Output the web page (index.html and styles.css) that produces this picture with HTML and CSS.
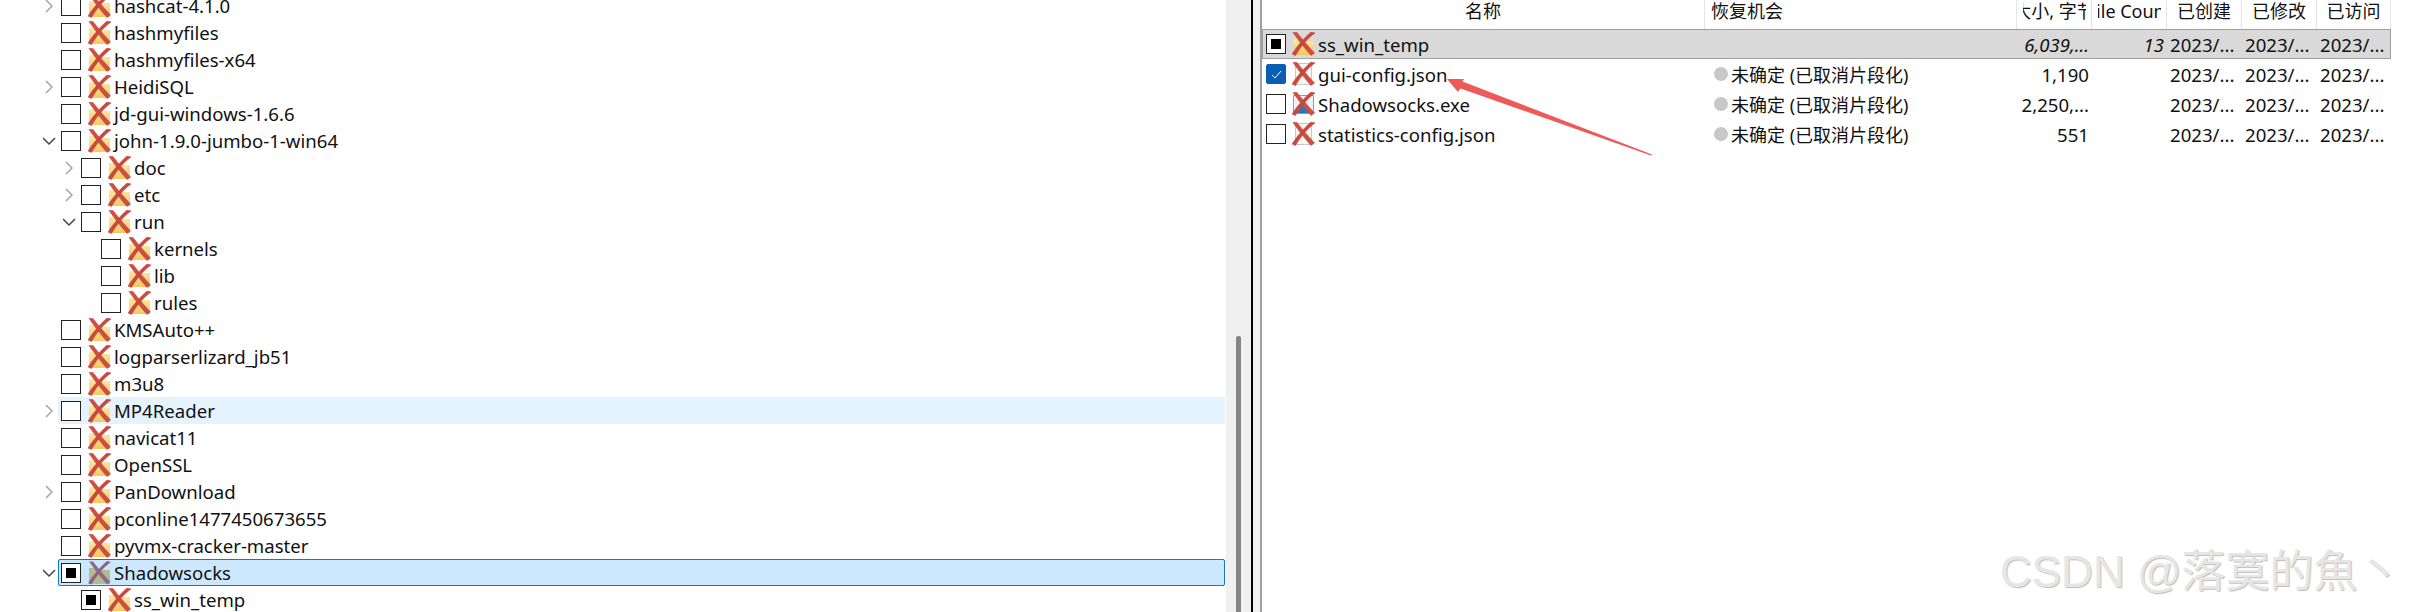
FILE: index.html
```html
<!DOCTYPE html>
<html lang="zh-CN">
<head>
    <meta charset="UTF-8">
    <title>Recovery</title>
    <link rel="stylesheet" href="styles.css">
</head>

<body>
    <svg class="defs" width="0" height="0">
        <defs>
            <linearGradient id="folder-fill" x1="0" y1="0" x2="0" y2="1">
                <stop offset="0" stop-color="#fde8a8"/>
                <stop offset="1" stop-color="#f5c85e"/>
            </linearGradient>
            <g id="cross" stroke="#c8483c" stroke-width="0.600">
                <path d="M1 0.500L5 0.500C10 7 16 14 22.500 21L19 23.500C13 17 7 9 1 0.500z" fill="#cc4f42"/>
                <path d="M19 0L23 1C16 6 9 14 3.500 23.500L0 22C6 13 12 6 19 0z" fill="#c8483c"/>
            </g>
            <symbol id="folder" viewBox="0 0 23 24">
                <path d="M1 7h8l2 2h11v14H1z" fill="url(#folder-fill)"/>
                <use href="#cross"/>
            </symbol>
            <symbol id="folder-dim" viewBox="0 0 23 24">
                <path d="M1 7h8l2 2h11v14H1z" fill="#b2ba8e"/>
                <path d="M1 0.500L5 0.500C10 7 16 14 22.500 21L19 23.500C13 17 7 9 1 0.500z" fill="#8f6a86"/>
                <path d="M19 0L23 1C16 6 9 14 3.500 23.500L0 22C6 13 12 6 19 0z" fill="#8b6480"/>
            </symbol>
            <symbol id="file" viewBox="0 0 23 24">
                <path d="M3.500 1.500h16v21h-16z" fill="#f6f6f6" stroke="#c8c8c8"/>
                <use href="#cross"/>
            </symbol>
            <symbol id="exe" viewBox="0 0 23 24">
                <path d="M1.500 3.500h20v18h-20z" fill="#eef1f5" stroke="#8f9bab"/>
                <path d="M11.500 11l7 10h-14z" fill="#2a78b8"/>
                <use href="#cross"/>
            </symbol>
        </defs>
    </svg>

    <div class="window">
        <div class="tree-pane">
            <ul class="tree">
                <li class="row lvl-0"><svg class="arrow"><path d="M3 1l6 6-6 6"/></svg><span class="check"></span><svg class="icon"><use href="#folder"/></svg>hashcat-4.1.0</li>
                <li class="row lvl-0"><span class="arrow"></span><span class="check"></span><svg class="icon"><use href="#folder"/></svg>hashmyfiles</li>
                <li class="row lvl-0"><span class="arrow"></span><span class="check"></span><svg class="icon"><use href="#folder"/></svg>hashmyfiles-x64</li>
                <li class="row lvl-0"><svg class="arrow"><path d="M3 1l6 6-6 6"/></svg><span class="check"></span><svg class="icon"><use href="#folder"/></svg>HeidiSQL</li>
                <li class="row lvl-0"><span class="arrow"></span><span class="check"></span><svg class="icon"><use href="#folder"/></svg>jd-gui-windows-1.6.6</li>
                <li class="row lvl-0"><svg class="arrow open"><path d="M0 4l6 6 6-6"/></svg><span class="check"></span><svg class="icon"><use href="#folder"/></svg>john-1.9.0-jumbo-1-win64</li>
                <li class="row lvl-1"><svg class="arrow"><path d="M3 1l6 6-6 6"/></svg><span class="check"></span><svg class="icon"><use href="#folder"/></svg>doc</li>
                <li class="row lvl-1"><svg class="arrow"><path d="M3 1l6 6-6 6"/></svg><span class="check"></span><svg class="icon"><use href="#folder"/></svg>etc</li>
                <li class="row lvl-1"><svg class="arrow open"><path d="M0 4l6 6 6-6"/></svg><span class="check"></span><svg class="icon"><use href="#folder"/></svg>run</li>
                <li class="row lvl-2"><span class="arrow"></span><span class="check"></span><svg class="icon"><use href="#folder"/></svg>kernels</li>
                <li class="row lvl-2"><span class="arrow"></span><span class="check"></span><svg class="icon"><use href="#folder"/></svg>lib</li>
                <li class="row lvl-2"><span class="arrow"></span><span class="check"></span><svg class="icon"><use href="#folder"/></svg>rules</li>
                <li class="row lvl-0"><span class="arrow"></span><span class="check"></span><svg class="icon"><use href="#folder"/></svg>KMSAuto++</li>
                <li class="row lvl-0"><span class="arrow"></span><span class="check"></span><svg class="icon"><use href="#folder"/></svg>logparserlizard_jb51</li>
                <li class="row lvl-0"><span class="arrow"></span><span class="check"></span><svg class="icon"><use href="#folder"/></svg>m3u8</li>
                <li class="row lvl-0 hover"><svg class="arrow"><path d="M3 1l6 6-6 6"/></svg><span class="check"></span><svg class="icon"><use href="#folder"/></svg>MP4Reader</li>
                <li class="row lvl-0"><span class="arrow"></span><span class="check"></span><svg class="icon"><use href="#folder"/></svg>navicat11</li>
                <li class="row lvl-0"><span class="arrow"></span><span class="check"></span><svg class="icon"><use href="#folder"/></svg>OpenSSL</li>
                <li class="row lvl-0"><svg class="arrow"><path d="M3 1l6 6-6 6"/></svg><span class="check"></span><svg class="icon"><use href="#folder"/></svg>PanDownload</li>
                <li class="row lvl-0"><span class="arrow"></span><span class="check"></span><svg class="icon"><use href="#folder"/></svg>pconline1477450673655</li>
                <li class="row lvl-0"><span class="arrow"></span><span class="check"></span><svg class="icon"><use href="#folder"/></svg>pyvmx-cracker-master</li>
                <li class="row lvl-0 selected"><svg class="arrow open"><path d="M0 4l6 6 6-6"/></svg><span class="check partial"></span><svg class="icon"><use href="#folder-dim"/></svg>Shadowsocks</li>
                <li class="row lvl-1"><span class="arrow"></span><span class="check partial"></span><svg class="icon"><use href="#folder"/></svg>ss_win_temp</li>
            </ul>
        </div>

        <div class="scrollbar"><div class="thumb"></div></div>
        <div class="splitter"></div>

        <div class="list-pane">
            <div class="cols head">
                <div class="cell center">名称</div>
                <div class="cell start">恢复机会</div>
                <div class="cell center"><span class="clip"><span>大小, 字节</span></span></div>
                <div class="cell center"><span class="clip"><span>File Count</span></span></div>
                <div class="cell center">已创建</div>
                <div class="cell center">已修改</div>
                <div class="cell center">已访问</div>
            </div>
            <div class="cols item current">
                <div class="cell name"><span class="check partial"></span><svg class="icon"><use href="#folder"/></svg>ss_win_temp</div>
                <div class="cell"></div>
                <div class="cell num italic">6,039,...</div>
                <div class="cell num italic">13</div>
                <div class="cell date">2023/...</div>
                <div class="cell date">2023/...</div>
                <div class="cell date">2023/...</div>
            </div>
            <div class="cols item">
                <div class="cell name"><span class="check checked"><svg width="11" height="9"><path d="M1 5l3 3 6-7"/></svg></span><svg class="icon"><use href="#file"/></svg>gui-config.json</div>
                <div class="cell chance"><span class="dot"></span>未确定 (已取消片段化)</div>
                <div class="cell num">1,190</div>
                <div class="cell num"></div>
                <div class="cell date">2023/...</div>
                <div class="cell date">2023/...</div>
                <div class="cell date">2023/...</div>
            </div>
            <div class="cols item">
                <div class="cell name"><span class="check"></span><svg class="icon"><use href="#exe"/></svg>Shadowsocks.exe</div>
                <div class="cell chance"><span class="dot"></span>未确定 (已取消片段化)</div>
                <div class="cell num">2,250,...</div>
                <div class="cell num"></div>
                <div class="cell date">2023/...</div>
                <div class="cell date">2023/...</div>
                <div class="cell date">2023/...</div>
            </div>
            <div class="cols item">
                <div class="cell name"><span class="check"></span><svg class="icon"><use href="#file"/></svg>statistics-config.json</div>
                <div class="cell chance"><span class="dot"></span>未确定 (已取消片段化)</div>
                <div class="cell num">551</div>
                <div class="cell num"></div>
                <div class="cell date">2023/...</div>
                <div class="cell date">2023/...</div>
                <div class="cell date">2023/...</div>
            </div>
        </div>

        <!-- red annotation arrow drawn on top of the screenshot -->
        <svg class="annotation" width="220" height="100" viewBox="0 0 220 100">
            <path d="M7 9L24 9L22.500 11.500L212 84.500L211 85.500L20.500 18.500L18 22z" fill="#ee5a5a"/>
        </svg>

        <div class="watermark">CSDN @落寞的魚丶</div>
    </div>
</body>

</html>
```

FILE: styles.css
```css
* {
    box-sizing: border-box;
}

html, body {
    margin: 0;
    height: 100%;
    overflow: hidden;
    background-color: #fff;
}

body {
    font-family: "Noto Sans", "Noto Sans CJK SC", sans-serif;
    font-size: 18.600px;
    color: #111;
}

.defs {
    display: block;
    height: 0;
}

.window {
    position: relative;
    display: flex;
    height: 612px;
    overflow: hidden;
}

.tree-pane {
    flex: 0 0 1226px;
    overflow: hidden;
}

.tree {
    list-style: none;
    margin: -8px 0 0;
    padding: 0 1px 0 0;
}

.row {
    display: flex;
    align-items: center;
    height: 27px;
    margin-left: 58px;
    white-space: nowrap;
}

.arrow {
    flex: 0 0 14px;
    width: 14px;
    height: 14px;
    margin-left: -15px;
    margin-right: 4px;
}

.arrow path {
    fill: none;
    stroke: #a6a6a6;
    stroke-width: 1.500;
}

.arrow.open path {
    stroke: #444;
}

.lvl-1 .arrow {
    margin-left: 5px;
}

.lvl-2 .arrow {
    margin-left: 25px;
}

.check {
    flex: none;
    display: flex;
    align-items: center;
    justify-content: center;
    width: 20px;
    height: 20px;
    border: 1px solid #222;
    background-color: #fff;
}

.check.partial::before {
    content: "";
    width: 10px;
    height: 10px;
    background-color: #000;
}

.check.checked {
    border-color: #0a5fb4;
    background-color: #0a5fb4;
    border-radius: 2px;
}

.check.checked path {
    fill: none;
    stroke: #fff;
    stroke-width: 1;
}

.icon {
    flex: none;
    width: 23px;
    height: 24px;
    margin: 0 3px 0 7px;
}

.hover {
    background-color: #e5f3ff;
}

.selected {
    background-color: #cce8ff;
    outline: 1px solid #0f7cb8;
    outline-offset: -1px;
    border-radius: 2px;
}

.scrollbar {
    flex: 0 0 25px;
    position: relative;
    background-color: #f0f0f0;
}

.thumb {
    position: absolute;
    left: 10px;
    top: 336px;
    bottom: 0;
    width: 5px;
    background-color: #858585;
    border-radius: 2px 2px 0 0;
}

.splitter {
    flex: 0 0 11px;
    background-color: #f0f0f0;
    border-left: 2px solid #000;
    border-right: 2px solid #a0a0a0;
}

.list-pane {
    flex: none;
    width: 1129px;
}

.cols {
    display: grid;
    grid-template-columns: 443px 312px repeat(4, 75px) 74px;
    align-items: center;
}

.head {
    height: 29px;
    font-size: 18px;
}

.head .cell {
    display: flex;
    height: 29px;
    line-height: 22px;
    border-right: 1px solid #e5e5e5;
    overflow: hidden;
}

.start {
    padding-left: 6px;
}

.center {
    justify-content: center;
}

/* long header titles are cut on both sides, short of the column edge */
.clip {
    display: flex;
    justify-content: center;
    flex: none;
    width: 63px;
    overflow: hidden;
}

.clip span {
    flex: none;
}

.item {
    height: 30px;
}

.current {
    background-color: #d9d9d9;
    box-shadow: inset 0 1px #a0a0a0, inset 0 -1px #a0a0a0, inset 1px 0 #a0a0a0, inset -1px 0 #a0a0a0;
}

.cell {
    min-width: 0;
    white-space: nowrap;
}

.name {
    display: flex;
    align-items: center;
    padding-left: 4px;
}

.name .icon {
    margin-left: 6px;
}

.chance {
    display: flex;
    align-items: center;
    padding-left: 9px;
    font-size: 18px;
}

.dot {
    width: 14px;
    height: 14px;
    margin-right: 3px;
    border-radius: 50%;
    background-color: #c8c8c8;
}

.num {
    text-align: right;
    padding-right: 3px;
}

.italic {
    font-style: italic;
}

.date {
    padding-left: 3px;
}

.annotation {
    position: absolute;
    left: 1440px;
    top: 70px;
}

.watermark {
    position: absolute;
    left: 2000px;
    top: 546px;
    font-family: "Liberation Sans", "Noto Sans CJK TC", sans-serif;
    font-size: 44px;
    line-height: 52px;
    white-space: nowrap;
    color: #e6e6e6;
    text-shadow: 1px 1px 1px #bdbdbd;
}
```
